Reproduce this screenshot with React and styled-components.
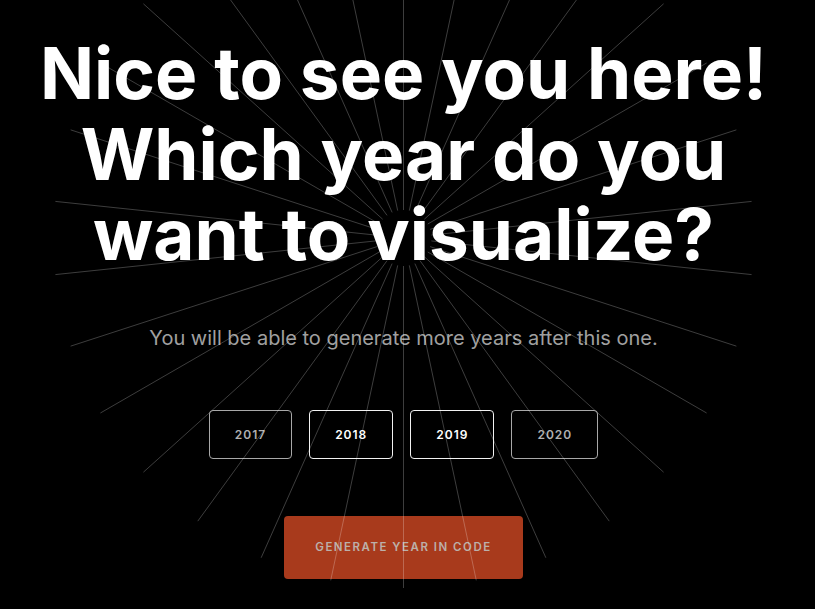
import React, { useState } from "react";
import styled, { createGlobalStyle } from "styled-components";

const Global = createGlobalStyle`
  html, body { margin: 0; padding: 0; background: #000; }
  body { font-family: Inter, "Noto Sans", sans-serif; color: #fff; overflow: hidden; }
  * { box-sizing: border-box; }
`;

const Page = styled.main`
  position: relative;
  width: 100%;
  height: 609px;
  padding: 33px 8px 0 0;
  display: flex;
  flex-direction: column;
  align-items: center;
  background: #000;
  overflow: hidden;
`;

const Rays = styled.svg`
  position: absolute;
  left: 0;
  top: 0;
  width: 815px;
  height: 609px;
  pointer-events: none;
  z-index: 2;
`;

const Title = styled.h1`
  margin: 0;
  width: 790px;
  font-size: 71px;
  line-height: 80.5px;
  font-weight: 700;
  text-align: center;
  letter-spacing: 0;
  color: #fff;
`;

const Subtitle = styled.p`
  margin: 48px 0 0;
  font-size: 20px;
  line-height: 30px;
  font-weight: 400;
  color: #a0a0a0;
`;

const Years = styled.div`
  margin-top: 57px;
  display: flex;
  gap: 17px;
`;

const YearButton = styled.button`
  height: 49px;
  padding: 0 25px;
  background: transparent;
  border: 1px solid ${(p) => (p.$bright ? "#f2f2f2" : "#a8a8a8")};
  border-radius: 4px;
  color: ${(p) => (p.$bright ? "#ffffff" : "#b0b0b0")};
  font-family: Inter, sans-serif;
  font-size: 12px;
  font-weight: 600;
  letter-spacing: 1px;
  cursor: pointer;
`;

const Generate = styled.button`
  margin-top: 57px;
  width: 239px;
  height: 63px;
  background: #a83a1c;
  border: none;
  border-radius: 4px;
  color: #bcb0aa;
  font-family: Inter, sans-serif;
  font-size: 11.5px;
  font-weight: 600;
  letter-spacing: 1.5px;
  text-transform: uppercase;
  cursor: pointer;
`;

const CX = 403.5;
const CY = 238;
const R_IN = 28;
const R_OUT = 350;

const rays = Array.from({ length: 30 }, (_, i) => {
  const a = ((6 + i * 12) * Math.PI) / 180;
  return {
    x1: CX + R_IN * Math.cos(a),
    y1: CY + R_IN * Math.sin(a),
    x2: CX + R_OUT * Math.cos(a),
    y2: CY + R_OUT * Math.sin(a),
  };
});

export default function App() {
  const [selected] = useState(["2018", "2019"]);
  const years = ["2017", "2018", "2019", "2020"];
  return (
    <Page>
      <Global />
      <Title>
        Nice to see you here!
        <br />
        Which year do you
        <br />
        want to visualize?
      </Title>
      <Subtitle>You will be able to generate more years after this one.</Subtitle>
      <Years>
        {years.map((y) => (
          <YearButton key={y} $bright={selected.includes(y)}>
            {y}
          </YearButton>
        ))}
      </Years>
      <Generate>Generate year in code</Generate>
      <Rays viewBox="0 0 815 609">
        {rays.map((r, i) => (
          <line
            key={i}
            x1={r.x1}
            y1={r.y1}
            x2={r.x2}
            y2={r.y2}
            stroke="rgba(255,255,255,0.24)"
            strokeWidth="1"
          />
        ))}
      </Rays>
    </Page>
  );
}
